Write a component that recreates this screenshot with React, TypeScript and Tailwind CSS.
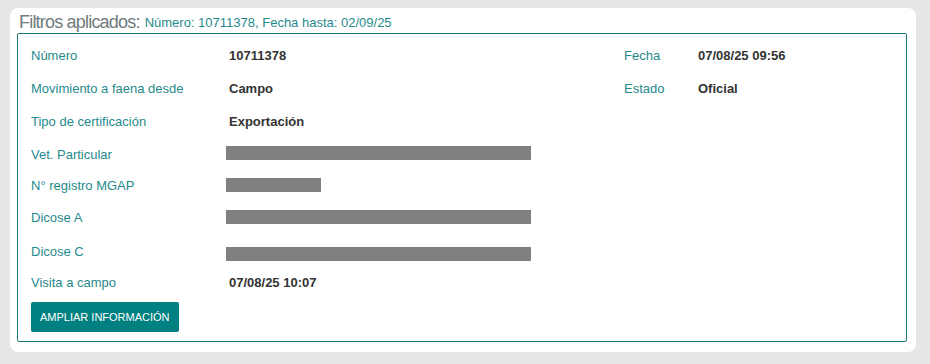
import React from "react"

type Row = {
  label: string
  h: number
  value?: string
  bar?: number
  barClass?: string
  rightLabel?: string
  rightValue?: string
}

const rows: Row[] = [
  { label: "Número", h: 33, value: "10711378", rightLabel: "Fecha", rightValue: "07/08/25 09:56" },
  { label: "Movimiento a faena desde", h: 33, value: "Campo", rightLabel: "Estado", rightValue: "Oficial" },
  { label: "Tipo de certificación", h: 33, value: "Exportación" },
  { label: "Vet. Particular", h: 33, bar: 305, barClass: "mb-[4px]" },
  { label: "N° registro MGAP", h: 29, bar: 95, barClass: "mb-[2px]" },
  { label: "Dicose A", h: 35, bar: 305, barClass: "mb-[2px]" },
  { label: "Dicose C", h: 33, bar: 305, barClass: "mt-[4px]" },
  { label: "Visita a campo", h: 29, value: "07/08/25 10:07" },
]

export default function App() {
  return (
    <div
      className="w-[930px] h-[364px] bg-[#e6e6e6] pt-[8px] pl-[10px]"
      style={{ fontFamily: '"Liberation Sans", Arial, sans-serif' }}
    >
      <div className="w-[906px] h-[344px] bg-white rounded-[8px] px-[7px]">
        {/* Encabezado */}
        <div className="h-[25px] flex items-center pl-[2px] pt-[2px]">
          <span className="text-[18px] text-[#707b7e] tracking-[-0.8px] leading-none">Filtros aplicados:</span>
          <span className="ml-[5px] text-[13px] text-[#1f8a8c] leading-none pt-[2px]">
            Número: 10711378, Fecha hasta: 02/09/25
          </span>
        </div>

        {/* Detalle */}
        <div className="w-[890px] border border-[#1a7a78] rounded-[2px] pl-[13px] pt-[5px] pb-[9px]">
          {rows.map((row) => (
            <div key={row.label} className="flex items-center text-[13px]" style={{ height: row.h }}>
              <div className="w-[195px] text-[#1f8a8c]">{row.label}</div>
              <div className="w-[398px] flex items-center">
                {row.bar ? (
                  <div className={`h-[14px] bg-[#808080] ${row.barClass ?? ""}`} style={{ width: row.bar }} />
                ) : (
                  <span className="pl-[3px] font-bold text-[#333333]">{row.value}</span>
                )}
              </div>
              {row.rightLabel && (
                <>
                  <div className="w-[74px] text-[#1f8a8c]">{row.rightLabel}</div>
                  <div className="font-bold text-[#333333]">{row.rightValue}</div>
                </>
              )}
            </div>
          ))}
          <button className="mt-[5px] h-[30px] px-[9px] bg-[#008080] text-white text-[11px] rounded-[2px]">
            AMPLIAR INFORMACIÓN
          </button>
        </div>
      </div>
    </div>
  )
}
